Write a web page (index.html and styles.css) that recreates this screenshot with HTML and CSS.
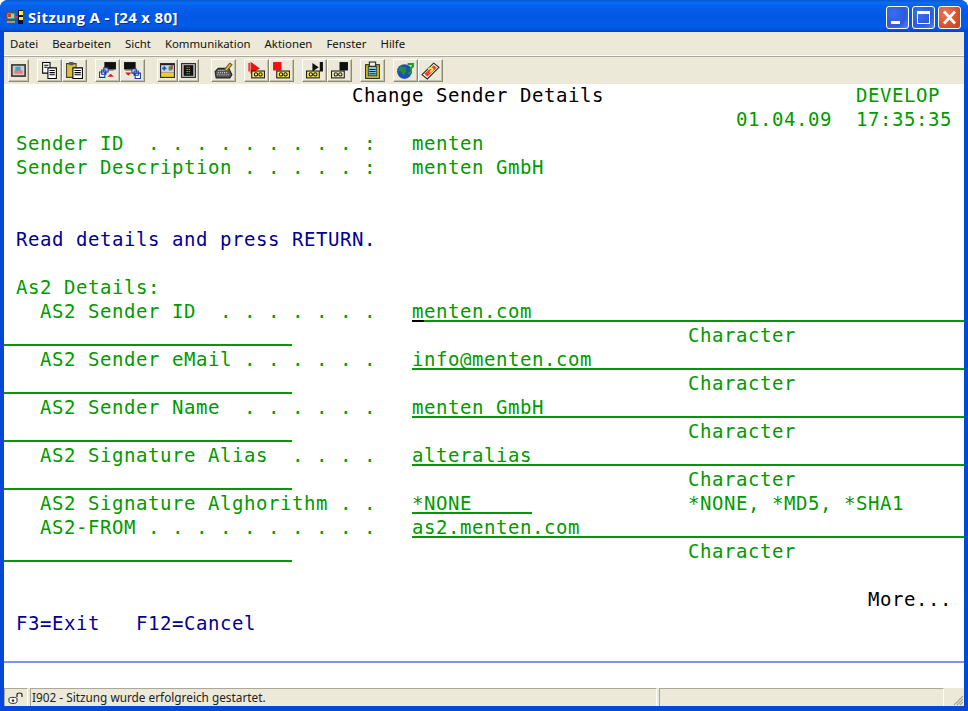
FILE: index.html
```html
<!DOCTYPE html>
<html lang="de">
<head>
<meta charset="utf-8">
<title>Sitzung A - [24 x 80]</title>
<link rel="stylesheet" href="styles.css">
</head>
<body>
<div class="window">
  <header class="titlebar">
    <svg class="app-icon" viewBox="0 0 18 16" width="18" height="16"><rect x="0" y="3" width="10" height="9" fill="#555"/><rect x="1.5" y="4.5" width="7" height="5" fill="#3fc"/><path d="M2 5h3v3H2z" fill="#d33"/><rect x="1" y="12" width="8" height="2" fill="#999"/><path d="M8 8h4" stroke="#f33" stroke-width="1.4"/><rect x="12" y="1" width="5" height="14" fill="#111"/><rect x="13" y="2" width="4" height="4" fill="#fe3"/><rect x="13" y="8" width="4" height="3" fill="#fe3"/></svg>
    <span class="title-text">Sitzung A - [24 x 80]</span>
    <div class="win-btns">
      <div class="win-btn"><svg viewBox="0 0 21 21" width="21" height="21"><rect x="4" y="14" width="9" height="3" fill="#fff"/></svg></div>
      <div class="win-btn"><svg viewBox="0 0 21 21" width="21" height="21"><rect x="4.5" y="4.5" width="12" height="12" fill="none" stroke="#fff"/><rect x="4" y="4" width="13" height="3" fill="#fff"/></svg></div>
      <div class="win-btn close"><svg viewBox="0 0 21 21" width="21" height="21"><path d="M5 4.500l11 12M16 4.500L5 16.500" stroke="#fff" stroke-width="2.6"/></svg></div>
    </div>
  </header>

  <div class="inner">
    <nav class="menubar">
      <span>Datei</span><span>Bearbeiten</span><span>Sicht</span><span>Kommunikation</span><span>Aktionen</span><span>Fenster</span><span>Hilfe</span>
    </nav>

    <div class="toolbar">
      <div class="group">
        <div class="tb narrow"><svg viewBox="0 0 16 16" width="17" height="17"><rect x="1" y="2" width="14" height="12" fill="#333"/><rect x="2.500" y="3.500" width="11" height="9" fill="#ccc"/><rect x="5" y="4.500" width="5" height="4" fill="#3ac"/><rect x="4" y="8" width="8" height="3" fill="#e77"/></svg></div>
      </div>
      <div class="group">
        <div class="tb"><svg viewBox="0 0 18 18" width="19" height="19"><path d="M2.500 1.500h7v10h-7z" fill="#fff" stroke="#000"/><path d="M7.500 6.500h8v10h-8z" fill="#fff" stroke="#000"/><path d="M4 4h4M4 6h3M9 9h5M9 11h5M9 13h5" stroke="#000"/></svg></div>
        <div class="tb"><svg viewBox="0 0 18 18" width="19" height="19"><path d="M1.500 2.500h9v13h-9z" fill="#d8c040" stroke="#443"/><rect x="4" y="1" width="4" height="3" fill="#555"/><path d="M7.500 6.500h9v10h-9z" fill="#fff" stroke="#000"/><path d="M9 9h6M9 11h6M9 13h6" stroke="#000"/></svg></div>
      </div>
      <div class="group">
        <div class="tb"><svg viewBox="0 0 18 18" width="19" height="19"><rect x="6" y="1" width="11" height="7" fill="#111"/><rect x="7" y="8" width="8" height="1" fill="#556"/><path d="M5.500 6.500h4v4h-4zM3.500 8.500h4v4h-4zM1.500 10.500h5v5h-5z" fill="#fff" stroke="#123a9a"/><path d="M9 15l3-3 3 3z" fill="#e11"/></svg></div>
        <div class="tb"><svg viewBox="0 0 18 18" width="19" height="19"><rect x="1" y="1" width="11" height="7" fill="#111"/><rect x="2" y="8" width="8" height="1" fill="#556"/><path d="M8.500 7.500h4v4h-4zM10.500 9.500h4v4h-4zM11.500 11.500h5v5h-5z" fill="#fff" stroke="#123a9a"/><path d="M2 11h6l-3 3z" fill="#e11"/></svg></div>
      </div>
      <div class="group spaced">
        <div class="tb narrow"><svg viewBox="0 0 16 16" width="17" height="17"><rect x="1" y="1" width="14" height="14" fill="#222"/><rect x="2" y="3" width="12" height="7" fill="#dce"/><path d="M5 4v4M3 6h4" stroke="#06a" stroke-width="1.500"/><rect x="9" y="4" width="3" height="4" fill="#2a5"/><rect x="11" y="3" width="2" height="4" fill="#c33"/><rect x="2" y="10" width="12" height="4" fill="#ec3"/></svg></div>
        <div class="tb narrow"><svg viewBox="0 0 16 16" width="17" height="17"><rect x="1" y="1" width="14" height="14" fill="#222"/><rect x="2" y="2" width="12" height="12" fill="#bbb"/><rect x="3.500" y="3" width="9" height="10" fill="#111"/><path d="M6 5h4M6 7h4M6 9h4M6 11h4" stroke="#2c4" stroke-dasharray="1.500 .5"/></svg></div>
      </div>
      <div class="group spaced">
        <div class="tb"><svg viewBox="0 0 18 18" width="19" height="19"><path d="M1 10l3-3h10l3 6-2 3H2z" fill="#555" stroke="#222"/><path d="M4 9h9M3.500 11h10M3 13h11" stroke="#ccc" stroke-dasharray="1 1"/><path d="M10 8l5-6 2 1.500-5 6z" fill="#e9c520" stroke="#654"/></svg></div>
      </div>
      <div class="group">
        <div class="tb"><svg viewBox="0 0 18 18" width="19" height="19"><path d="M2 2v8M4 2l7 5-7 4z" fill="#e11" stroke="#e11" stroke-width="1.300"/><rect x="4.500" y="9.500" width="12" height="6.500" fill="#fdf25a" stroke="#111"/><circle cx="8.500" cy="12.700" r="1.600" fill="none" stroke="#111"/><circle cx="12.800" cy="12.700" r="1.600" fill="none" stroke="#111"/></svg></div>
        <div class="tb"><svg viewBox="0 0 18 18" width="19" height="19"><rect x="1" y="1" width="8" height="8" fill="#e11"/><rect x="4.500" y="9.500" width="12" height="6.500" fill="#fdf25a" stroke="#111"/><circle cx="8.500" cy="12.700" r="1.600" fill="none" stroke="#111"/><circle cx="12.800" cy="12.700" r="1.600" fill="none" stroke="#111"/></svg></div>
      </div>
      <div class="group">
        <div class="tb"><svg viewBox="0 0 18 18" width="19" height="19"><path d="M7 2l6 4-6 4zM14 1h3v9h-3z" fill="#111"/><rect x="1.500" y="9.500" width="12" height="6.500" fill="#fdf25a" stroke="#111"/><circle cx="5.500" cy="12.700" r="1.600" fill="none" stroke="#111"/><circle cx="9.800" cy="12.700" r="1.600" fill="none" stroke="#111"/></svg></div>
        <div class="tb"><svg viewBox="0 0 18 18" width="19" height="19"><rect x="9" y="1" width="8" height="8" fill="#111"/><rect x="1.500" y="9.500" width="12" height="6.500" fill="#fff8c0" stroke="#111"/><circle cx="5.500" cy="12.700" r="1.600" fill="none" stroke="#111"/><circle cx="9.800" cy="12.700" r="1.600" fill="none" stroke="#111"/></svg></div>
      </div>
      <div class="group">
        <div class="tb"><svg viewBox="0 0 18 18" width="19" height="19"><rect x="2.500" y="3.500" width="13" height="13" fill="#e4c820" stroke="#222"/><rect x="5" y="5" width="8" height="9" fill="#7ec8d8" stroke="#245"/><rect x="6" y="1" width="6" height="4" fill="#eee" stroke="#222"/><path d="M6 8h6M6 10h6M6 12h6" stroke="#124"/></svg></div>
      </div>
      <div class="group">
        <div class="tb"><svg viewBox="0 0 18 18" width="19" height="19"><circle cx="8" cy="10" r="7" fill="#1d4fb5"/><path d="M4 5l5 1 1 4-3 4-2-4-3-1zM11 11l3-1-1 4z" fill="#2a8c34"/><path d="M11 3h5v2l-2 2v2" fill="none" stroke="#18a028" stroke-width="2"/><rect x="13" y="10" width="2" height="2" fill="#18a028"/></svg></div>
        <div class="tb"><svg viewBox="0 0 18 18" width="19" height="19"><path d="M1 13L12 2l5 4L6 17z" fill="#fff" stroke="#222"/><path d="M3 12l9-8 3 2.500-9 8.500z" fill="#e42"/><path d="M7 8c2-2 4-1 4 0s-2 1-2 3" fill="none" stroke="#fe3" stroke-width="1.700"/></svg></div>
      </div>
    </div>

    <main class="screen">
      <div class="row black"><span class="c29">Change Sender Details</span><span class="green c-dev">DEVELOP</span></div>
      <div class="row green"><span class="c61">01.04.09  17:35:35</span></div>
      <div class="row green"> Sender ID  . . . . . . . . . :   menten</div>
      <div class="row green"> Sender Description . . . . . :   menten GmbH</div>
      <div class="row"></div>
      <div class="row"></div>
      <div class="row blue"> Read details and press RETURN.</div>
      <div class="row"></div>
      <div class="row green"> As2 Details:</div>
      <div class="row green">   AS2 Sender ID  . . . . . . .   <span class="fld long cursor">menten.com</span></div>
      <div class="row green"><span class="fld cont"></span><span class="hint">Character</span></div>
      <div class="row green">   AS2 Sender eMail . . . . . .   <span class="fld long">info@menten.com</span></div>
      <div class="row green"><span class="fld cont"></span><span class="hint">Character</span></div>
      <div class="row green">   AS2 Sender Name  . . . . . .   <span class="fld long">menten GmbH</span></div>
      <div class="row green"><span class="fld cont"></span><span class="hint">Character</span></div>
      <div class="row green">   AS2 Signature Alias  . . . .   <span class="fld long">alteralias</span></div>
      <div class="row green"><span class="fld cont"></span><span class="hint">Character</span></div>
      <div class="row green">   AS2 Signature Alghorithm . .   <span class="fld short">*NONE</span><span class="hint-short">*NONE, *MD5, *SHA1</span></div>
      <div class="row green">   AS2-FROM . . . . . . . . . .   <span class="fld long">as2.menten.com</span></div>
      <div class="row green"><span class="fld cont"></span><span class="hint">Character</span></div>
      <div class="row"></div>
      <div class="row black"><span class="c72">More...</span></div>
      <div class="row blue"> F3=Exit   F12=Cancel</div>
      <div class="row"></div>
      <div class="oia"></div>
    </main>

    <footer class="statusbar">
      <div class="st-lock"><svg viewBox="0 0 18 14" width="18" height="14"><path d="M10 6V3.500C10 1.500 15 1.500 15 3.500V6" fill="none" stroke="#222" stroke-width="1.200"/><path d="M2 7.500C2 6 10 6 10 7.500v3C10 13 2 13 2 10.500z" fill="#fff" stroke="#222"/><circle cx="6" cy="9.500" r="1.300" fill="#333"/></svg></div>
      <div class="st-msg">I902 - Sitzung wurde erfolgreich gestartet.</div>
      <div class="st-extra"></div>
      <div class="st-grip"><svg viewBox="0 0 12 12" width="12" height="12"><path d="M11 2l-9 9M11 5l-6 6M11 8l-3 3" stroke="#aca899" stroke-width="1.200"/></svg></div>
    </footer>
  </div>
</div>
</body>
</html>
```
FILE: styles.css
```css
html, body {
  margin: 0;
  padding: 0;
  background: #fff;
  overflow: hidden;
}

.window {
  width: 968px;
  height: 711px;
  display: flex;
  flex-direction: column;
  box-sizing: border-box;
  background: #0348d8;
  border-radius: 8px 8px 0 0;
  overflow: hidden;
}

.titlebar {
  height: 32px;
  flex: none;
  display: flex;
  align-items: center;
  padding: 2px 7px 0 6px;
  box-sizing: border-box;
  background: linear-gradient(#0a58d0 0, #0a6cf4 3px, #0561ec 6px, #0258e4 16px, #025ce8 26px, #0250d8 30px, #0040c0 32px);
}

.app-icon { flex: none; margin-right: 4px; }

.title-text {
  font-family: "Open Sans", sans-serif;
  font-weight: 700;
  font-size: 15px;
  letter-spacing: 0.35px;
  color: #fff;
  text-shadow: 1px 1px 0 #0030a0;
  white-space: pre;
}

.win-btns {
  margin-left: auto;
  display: flex;
  gap: 3px;
}

.win-btn {
  width: 23px;
  height: 23px;
  box-sizing: border-box;
  border: 1px solid #fff;
  border-radius: 3px;
  background: radial-gradient(circle at 30% 30%, #3a6df0, #2a5bdc 60%, #5a86ec);
}

.win-btn svg { display: block; }

.win-btn.close {
  background: radial-gradient(circle at 30% 30%, #e8765a, #d8502c 60%, #c84018);
}

.inner {
  flex: 1;
  min-height: 0;
  margin: 0 4px 5px 4px;
  display: flex;
  flex-direction: column;
  background: #fff;
}

.menubar {
  height: 23px;
  flex: none;
  display: flex;
  align-items: center;
  gap: 14px;
  padding-left: 6px;
  background: #ece9d8;
  border-bottom: 1px solid #fff;
  font-family: "Noto Sans", sans-serif;
  font-size: 11.4px;
  color: #111;
}

.toolbar {
  height: 28px;
  flex: none;
  display: flex;
  align-items: center;
  gap: 8px;
  padding-left: 4px;
  box-sizing: border-box;
  background: #ece9d8;
  border-top: 1px solid #aca899;
}

.group { display: flex; gap: 0; }
.group.spaced { margin-left: 4px; }

.tb {
  width: 25px;
  height: 23px;
  box-sizing: border-box;
  display: flex;
  align-items: center;
  justify-content: center;
  background: #ece9d8;
  border: 1px solid;
  border-color: #fff #8c8974 #8c8974 #fff;
  box-shadow: inset -1px -1px 0 #c4c1ac;
}

.tb.narrow { width: 21px; }

.screen {
  flex: 1;
  min-height: 0;
  font-family: "DejaVu Sans Mono", monospace;
  font-size: 19px;
  letter-spacing: 0.562px;
  line-height: 22px;
  background: #fff;
}

.row {
  height: 24px;
  white-space: pre;
}

.green { color: #009a00; }
.black { color: #000; }
.blue { color: #000094; }

.c29 { margin-left: 348px; }
.c-dev { margin-left: 252px; }
.c61 { margin-left: 732px; }
.c72 { margin-left: 864px; }

.fld {
  display: inline-block;
  height: 22px;
  box-sizing: content-box;
  line-height: 22px;
  vertical-align: top;
  border-bottom: 2px solid #009a00;
  margin-bottom: -2px;
}

.fld.long { width: 552px; }
.fld.short { width: 120px; }
.fld.cont { width: 288px; height: 20px; }
.fld.long, .fld.short { height: 20px; }

.hint { margin-left: 396px; }
.hint-short { margin-left: 156px; }

.cursor { position: relative; }

.cursor::after {
  content: "";
  position: absolute;
  left: 0;
  bottom: -2px;
  width: 12px;
  height: 2px;
  background: #000;
}

.oia {
  height: 2px;
  margin-top: 1px;
  background: #7a94f0;
}

.statusbar {
  height: 18px;
  flex: none;
  display: flex;
  box-sizing: border-box;
  background: #ece9d8;
  font-family: "Noto Sans", sans-serif;
  font-size: 11.8px;
  color: #222;
  line-height: 17px;
}

.st-lock, .st-msg, .st-extra {
  box-sizing: border-box;
  border-top: 1px solid #aca899;
  border-left: 1px solid #aca899;
  border-right: 1px solid #fff;
}

.st-lock { width: 24px; display: flex; align-items: center; justify-content: center; }
.st-msg { width: 627px; margin-left: 2px; padding-left: 1px; }
.st-extra { width: 285px; margin-left: 2px; }
.st-grip { flex: 1; display: flex; align-items: flex-end; justify-content: flex-end; }
```
